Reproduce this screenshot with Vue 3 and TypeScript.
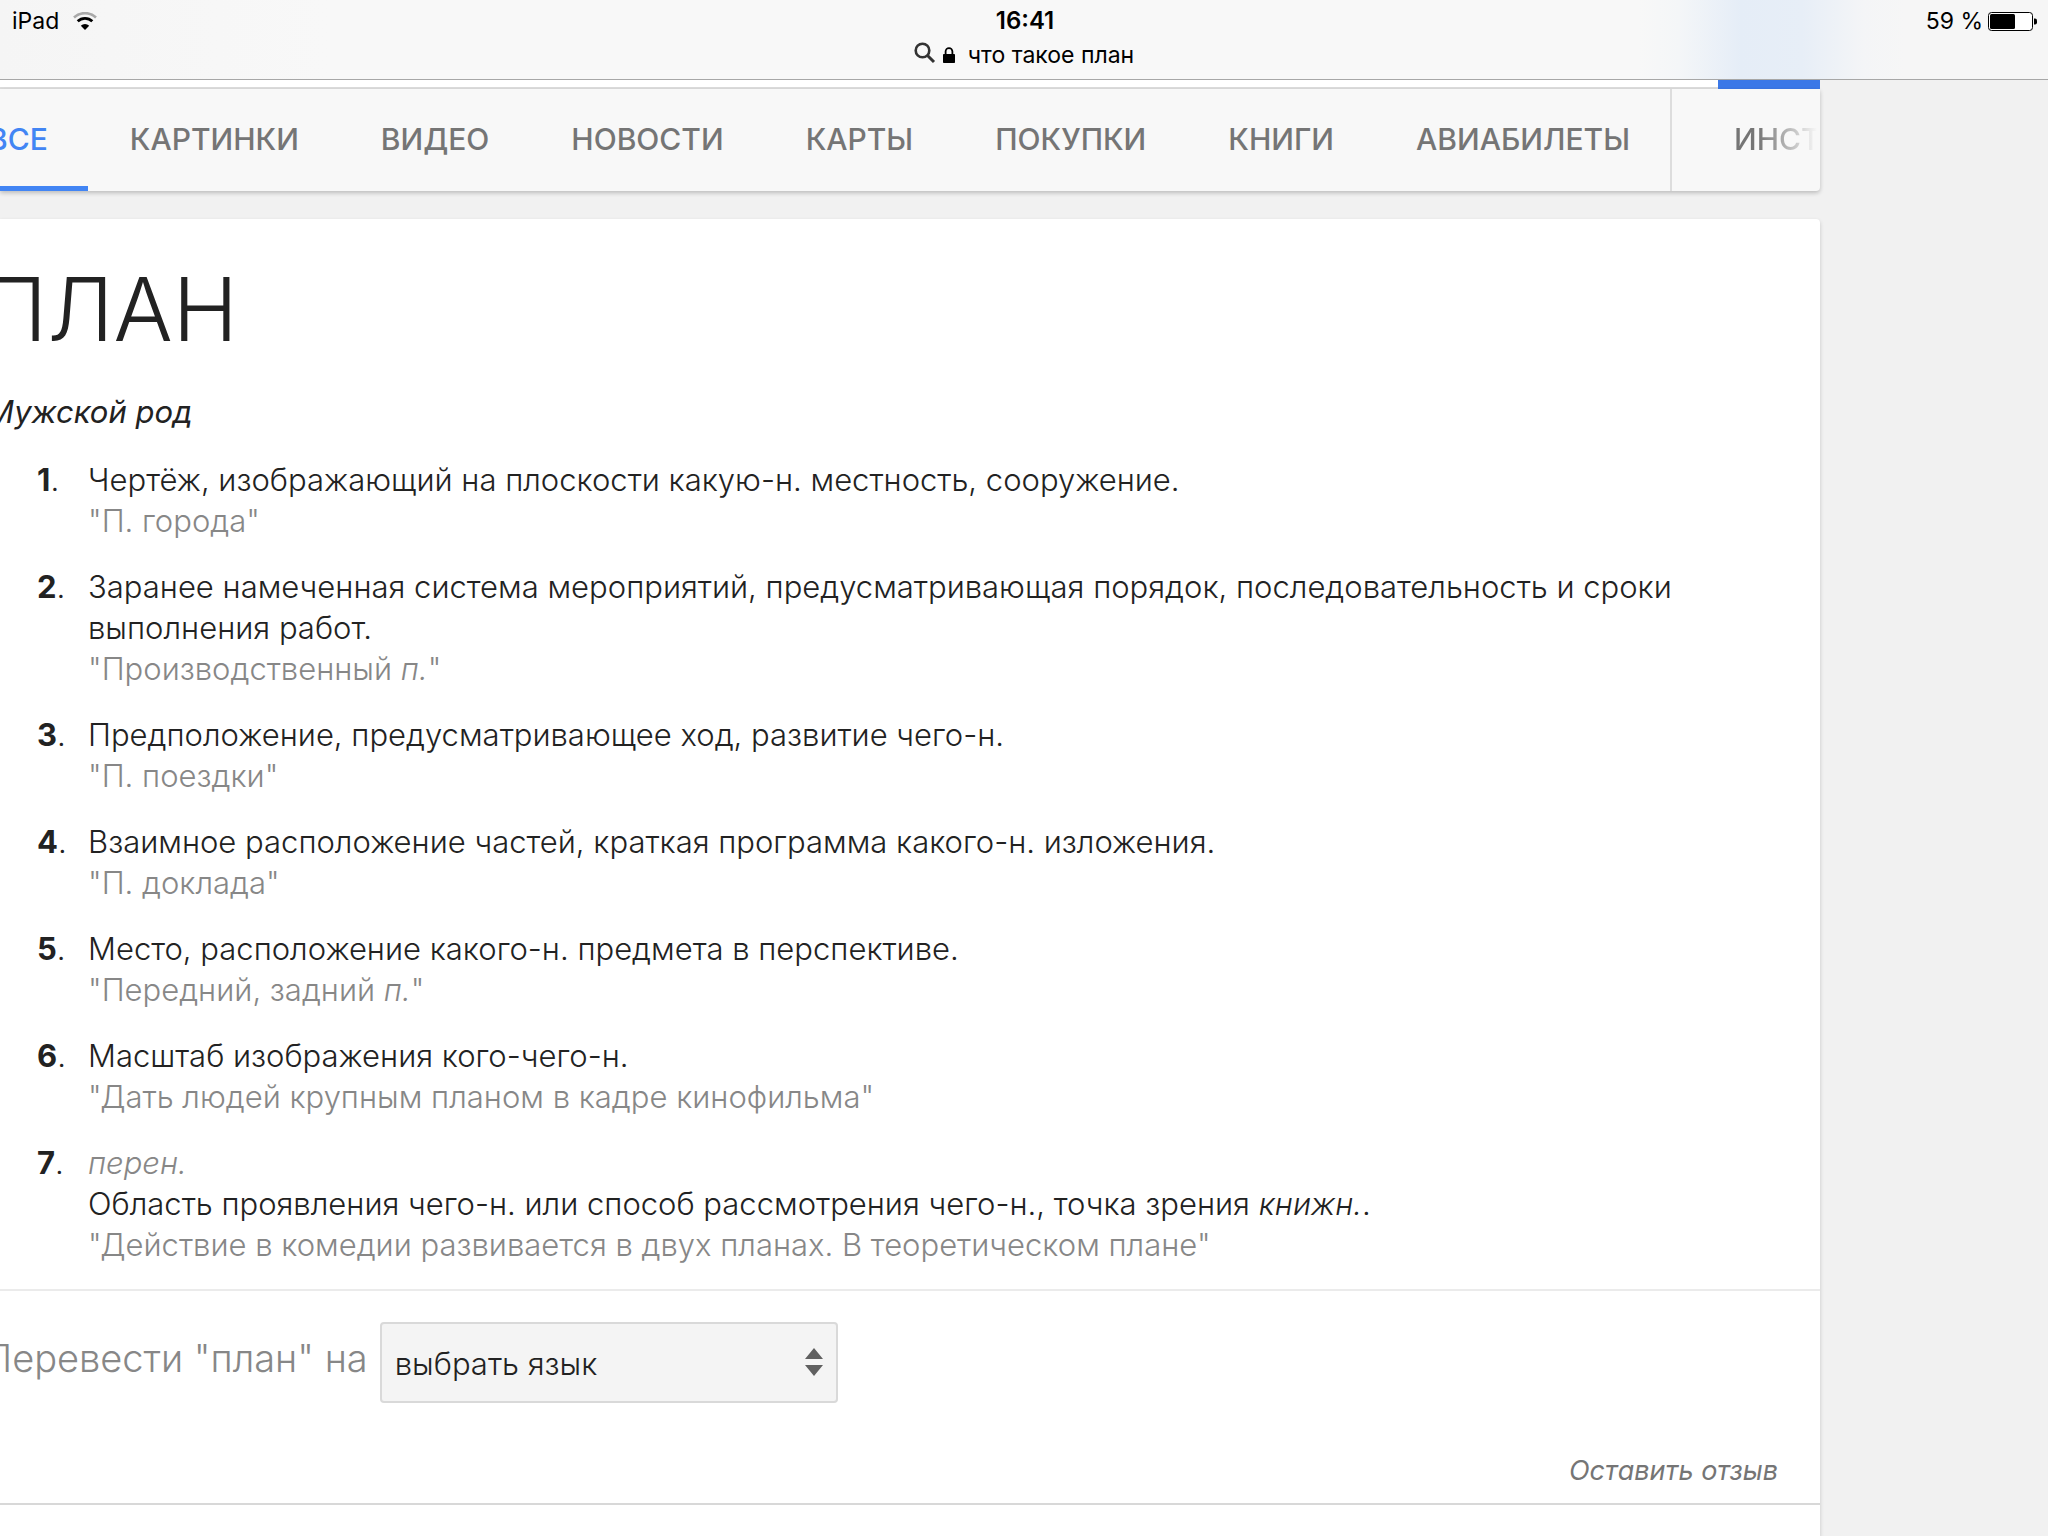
<script setup lang="ts">
import { ref } from 'vue'

interface Definition {
  note?: string
  text: string
  usage?: string
  example: string
  abbr?: string
}

const tabs: string[] = ['ВСЕ', 'КАРТИНКИ', 'ВИДЕО', 'НОВОСТИ', 'КАРТЫ', 'ПОКУПКИ', 'КНИГИ', 'АВИАБИЛЕТЫ']

const definitions: Definition[] = [
  { text: 'Чертёж, изображающий на плоскости какую-н. местность, сооружение.', example: 'П. города' },
  {
    text: 'Заранее намеченная система мероприятий, предусматривающая порядок, последовательность и сроки выполнения работ.',
    example: 'Производственный ',
    abbr: 'п.',
  },
  { text: 'Предположение, предусматривающее ход, развитие чего-н.', example: 'П. поездки' },
  { text: 'Взаимное расположение частей, краткая программа какого-н. изложения.', example: 'П. доклада' },
  { text: 'Место, расположение какого-н. предмета в перспективе.', example: 'Передний, задний ', abbr: 'п.' },
  { text: 'Масштаб изображения кого-чего-н.', example: 'Дать людей крупным планом в кадре кинофильма' },
  {
    note: 'перен.',
    text: 'Область проявления чего-н. или способ рассмотрения чего-н., точка зрения ',
    usage: 'книжн.',
    example: 'Действие в комедии развивается в двух планах. В теоретическом плане',
  },
]

const language = ref('')
</script>

<template>
  <div class="screen">
    <header class="browser-bar">
      <div class="status">
        <div class="status-side">
          <span>iPad</span>
          <svg class="wifi" viewBox="0 0 24 18" aria-hidden="true">
            <path d="M1 5.5a16 16 0 0 1 22 0" fill="none" stroke="#a9a9a9" stroke-width="2.6" />
            <path d="M4.700 9.300a10.500 10.500 0 0 1 14.600 0" fill="none" stroke="#000" stroke-width="2.800" />
            <path d="M12 18l-4.200-4.200a6 6 0 0 1 8.400 0z" />
          </svg>
        </div>
        <time class="clock">16:41</time>
        <div class="status-side status-right">
          <span>59 %</span>
          <svg class="battery" viewBox="0 0 50 19" aria-hidden="true">
            <rect x="0.500" y="0.500" width="44" height="18" rx="3" fill="#fff" stroke="#000" />
            <rect x="2" y="2" width="25" height="15" rx="1.500" />
            <path d="M46 6.500h1a2 2 0 0 1 2 2v2a2 2 0 0 1-2 2h-1z" />
          </svg>
        </div>
      </div>
      <div class="address">
        <svg class="search" viewBox="0 0 22 22" aria-hidden="true">
          <circle cx="8.500" cy="8.500" r="6.800" fill="none" stroke="#333" stroke-width="2.600" />
          <path d="M13.500 13.500l6.500 6.500" stroke="#333" stroke-width="3" />
        </svg>
        <svg class="lock" viewBox="0 0 12 16" aria-hidden="true">
          <rect y="7" width="12" height="9" rx="0.800" />
          <path d="M2.600 8V4.600a3.400 3.400 0 0 1 6.800 0V8" fill="none" stroke="#000" stroke-width="1.800" />
        </svg>
        <span>что такое план</span>
      </div>
    </header>

    <main class="page">
      <div class="search-edge"><span class="search-button"></span></div>
      <nav class="tabs">
        <div class="tab-list">
          <a v-for="(tab, i) in tabs" :key="tab" href="#" class="tab" :class="{ active: i === 0 }">{{ tab }}</a>
        </div>
        <a href="#" class="tools">ИНСТ</a>
      </nav>

      <article class="card">
        <section class="entry">
          <h1>ПЛАН</h1>
          <p class="gender">Мужской род</p>
          <ol>
            <li v-for="(d, i) in definitions" :key="i">
              <span class="number"><b>{{ i + 1 }}</b>.</span>
              <div class="meaning">
                <div v-if="d.note" class="example"><i>{{ d.note }}</i></div>
                <div>{{ d.text }}<template v-if="d.usage"><i>{{ d.usage }}</i>.</template></div>
                <div class="example">"{{ d.example }}<i v-if="d.abbr">{{ d.abbr }}</i>"</div>
              </div>
            </li>
          </ol>
        </section>
        <section class="translate">
          <div class="translate-row">
            <label for="language">Перевести "план" на</label>
            <div class="select-box">
              <select id="language" v-model="language">
                <option value="">выбрать язык</option>
              </select>
              <svg class="arrows" viewBox="0 0 18 28" aria-hidden="true">
                <path d="M9 0l9 11H0zM9 28l9-11H0z" fill="#606060" />
              </svg>
            </div>
          </div>
          <a href="#" class="feedback">Оставить отзыв</a>
        </section>
      </article>
    </main>
  </div>
</template>

<style>
html,
body {
  background: #f1f1f1;
}
body {
  margin: 0;
  overflow: hidden;
}
</style>

<style scoped>
* {
  box-sizing: border-box;
}
.screen {
  display: flex;
  flex-direction: column;
  min-height: 100vh;
  overflow: hidden;
  color: #222;
  font-family: Inter, "Liberation Sans", sans-serif;
}
a {
  color: inherit;
  text-decoration: none;
}
.browser-bar {
  height: 80px;
  border-bottom: 1px solid #a7a7a7;
  background: linear-gradient(90deg, #f5f5f5 0, #f8f8f8 16%, #f8f8f8 80%, #f4f6f8 82%, #e5edf7 85%, #e7eef7 88%, #f4f5f7 91%, #f6f6f6 93%);
  color: #000;
  font-size: 23px;
  line-height: 28px;
}
.status {
  display: flex;
  padding: 7px 10px 0 12px;
}
.status-side {
  display: flex;
  flex: 1;
  align-items: center;
  gap: 14px;
}
.status-right {
  justify-content: flex-end;
  gap: 5px;
}
.clock {
  font-size: 24px;
  font-weight: 600;
}
.wifi {
  width: 24px;
  height: 18px;
}
.battery {
  width: 50px;
  height: 19px;
}
.address {
  display: flex;
  justify-content: center;
  align-items: center;
  padding-top: 6px;
}
.search {
  width: 22px;
  height: 22px;
  margin-bottom: 4px;
}
.lock {
  width: 12px;
  height: 16px;
  margin: 0 13px 0 7px;
}
.page {
  display: flex;
  flex: 1;
  flex-direction: column;
  margin-right: 228px;
}
.search-edge {
  display: flex;
  justify-content: flex-end;
  height: 9px;
  border-bottom: 2px solid #ddd;
  background: #fff;
}
.search-button {
  width: 102px;
  height: 9px;
  background: #3b78e7;
}
.tabs {
  display: flex;
  height: 102px;
  margin-bottom: 28px;
  border-radius: 0 0 4px 0;
  background: #f8f8f8;
  box-shadow: 0 2px 4px rgba(0, 0, 0, 0.22);
  color: #757575;
  font-size: 30px;
  font-weight: 550;
  line-height: 101px;
}
.tab-list {
  display: flex;
  flex: 1;
  justify-content: space-between;
  margin-left: -52px;
  border-right: 2px solid #ddd;
}
.tab {
  padding: 0 40px;
}
.active {
  border-bottom: 5px solid #4285f4;
  color: #4285f4;
}
.tools {
  width: 148px;
  padding-left: 62px;
  background: linear-gradient(90deg, #757575 58%, #f8f8f8 98%) text;
  color: transparent;
}
.card {
  flex: 1;
  border-radius: 0 4px 0 0;
  background: #fff;
  box-shadow: 0 2px 4px rgba(0, 0, 0, 0.18);
  font-size: 31px;
  font-weight: 300;
  line-height: 41px;
}
.entry {
  padding: 44px 42px 24px 0;
  border-bottom: 2px solid #ebebeb;
}
h1 {
  margin: 0 0 0 -18px;
  font-size: 88px;
  font-weight: 300;
  line-height: 92px;
}
.gender {
  margin: 36px 0 27px -14px;
  font-style: italic;
  font-weight: 400;
}
ol {
  display: flex;
  flex-direction: column;
  gap: 25px;
  margin: 0;
  padding: 0;
  list-style: none;
}
li {
  display: flex;
}
.number {
  flex: none;
  width: 88px;
  padding-left: 37px;
}
.number b {
  font-weight: 700;
}
.example {
  color: #878787;
}
.translate {
  padding: 31px 42px 12px 0;
  border-bottom: 2px solid #d8d8d8;
}
.translate-row {
  display: flex;
  align-items: center;
  gap: 12px;
  margin-left: -16px;
}
label {
  margin-bottom: 8px;
  color: #878787;
  font-size: 38px;
}
.select-box {
  position: relative;
  width: 458px;
}
select {
  display: block;
  width: 100%;
  height: 81px;
  padding: 2px 13px 0;
  border: 2px solid #d9d9d9;
  border-radius: 4px;
  appearance: none;
  background: #f4f4f4;
  color: #222;
  font: inherit;
}
.arrows {
  position: absolute;
  top: 26px;
  right: 15px;
  width: 18px;
  height: 28px;
  pointer-events: none;
}
.feedback {
  display: block;
  margin-top: 47px;
  color: #757575;
  font-size: 27px;
  font-style: italic;
  font-weight: 400;
  text-align: right;
}
</style>
